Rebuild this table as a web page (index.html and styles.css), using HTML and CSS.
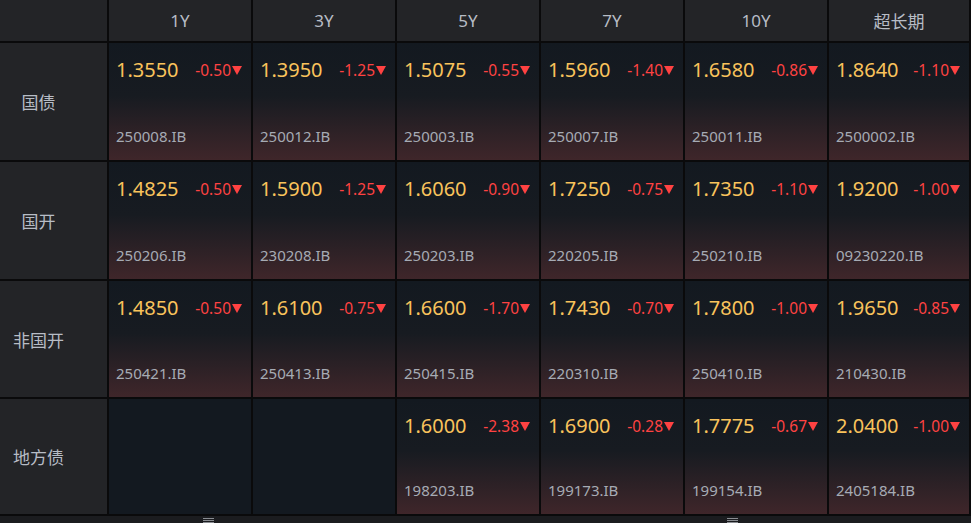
FILE: index.html
```html
<!DOCTYPE html>
<html lang="zh-CN">
<head>
  <meta charset="UTF-8">
  <title>利率债收益率</title>
  <link rel="stylesheet" href="styles.css">
</head>
<body>
  <div class="board" id="board">
    <div class="head-cell"></div>
    <div class="head-cell">1Y</div>
    <div class="head-cell">3Y</div>
    <div class="head-cell">5Y</div>
    <div class="head-cell">7Y</div>
    <div class="head-cell">10Y</div>
    <div class="head-cell">超长期</div>
  </div>
  <div class="status-bar">
    <span class="grip grip-left"></span>
    <span class="grip grip-right"></span>
  </div>

  <script>
    const rows = [
      { name: "国债", cells: [
        ["1.3550", "-0.50", "250008.IB"], ["1.3950", "-1.25", "250012.IB"],
        ["1.5075", "-0.55", "250003.IB"], ["1.5960", "-1.40", "250007.IB"],
        ["1.6580", "-0.86", "250011.IB"], ["1.8640", "-1.10", "2500002.IB"]
      ]},
      { name: "国开", cells: [
        ["1.4825", "-0.50", "250206.IB"], ["1.5900", "-1.25", "230208.IB"],
        ["1.6060", "-0.90", "250203.IB"], ["1.7250", "-0.75", "220205.IB"],
        ["1.7350", "-1.10", "250210.IB"], ["1.9200", "-1.00", "09230220.IB"]
      ]},
      { name: "非国开", cells: [
        ["1.4850", "-0.50", "250421.IB"], ["1.6100", "-0.75", "250413.IB"],
        ["1.6600", "-1.70", "250415.IB"], ["1.7430", "-0.70", "220310.IB"],
        ["1.7800", "-1.00", "250410.IB"], ["1.9650", "-0.85", "210430.IB"]
      ]},
      { name: "地方债", cells: [
        null, null,
        ["1.6000", "-2.38", "198203.IB"], ["1.6900", "-0.28", "199173.IB"],
        ["1.7775", "-0.67", "199154.IB"], ["2.0400", "-1.00", "2405184.IB"]
      ]}
    ];

    const board = document.getElementById("board");
    const arrow = `<svg class="arrow" width="10" height="9" viewBox="0 0 10 9"><path d="M0 0H10L5 9Z" fill="#ff4242"/></svg>`;

    rows.forEach(row => {
      board.innerHTML += `<div class="row-label"><span>${row.name}</span></div>`;
      row.cells.forEach(c => {
        if (!c) {
          board.innerHTML += `<div class="cell empty"></div>`;
          return;
        }
        board.innerHTML += `
          <div class="cell">
            <div class="top-line">
              <span class="price">${c[0]}</span>
              <span class="change">${c[1]}${arrow}</span>
            </div>
            <div class="code">${c[2]}</div>
          </div>`;
      });
    });
  </script>
</body>
</html>
```
FILE: styles.css
```css
:root {
  --line: #0a0a0b;
  --head-bg: #232427;
  --cell-top: #131920;
  --cell-bottom: #3f262a;
  --label: #b7bcc5;
  --price: #f9c35c;
  --down: #ff4242;
  --code: #a6abb4;
}

body {
  margin: 0;
  background: var(--line);
  font-family: "Noto Sans", "Noto Sans CJK SC", sans-serif;
  width: 971px;
  height: 523px;
  overflow: hidden;
}

.board {
  display: grid;
  grid-template-columns: 107px repeat(5, 142px) 140px;
  grid-template-rows: 41px 117px 117px 116px 115px;
  gap: 2px;
  background: var(--line);
  padding-right: 2px;
}

.head-cell {
  background: var(--head-bg);
  color: var(--label);
  font-size: 17px;
  display: flex;
  align-items: center;
  justify-content: center;
  padding-bottom: 1px;
}

.row-label {
  background: var(--head-bg);
  color: var(--label);
  font-size: 17px;
  display: flex;
  align-items: center;
  justify-content: center;
  padding-right: 30px;
}

.cell {
  background: linear-gradient(to bottom, var(--cell-top) 0%, #171b21 45%, var(--cell-bottom) 100%);
  display: flex;
  flex-direction: column;
  justify-content: space-between;
  padding: 14px 9px 14px 7px;
}

.cell.empty {
  background: var(--cell-top);
}

.top-line {
  display: flex;
  justify-content: space-between;
  align-items: center;
}

.price {
  color: var(--price);
  font-size: 20px;
  line-height: 26px;
}

.change {
  color: var(--down);
  font-size: 15.5px;
  display: flex;
  align-items: center;
  gap: 1px;
}

.arrow {
  display: block;
}

.code {
  color: var(--code);
  font-size: 15px;
  line-height: 20px;
}

.status-bar {
  position: relative;
  height: 7px;
  margin-top: 2px;
  background: #1b1c1f;
}

.grip {
  position: absolute;
  top: 2px;
  width: 11px;
  height: 5px;
  background: repeating-linear-gradient(to bottom, #8a8d92 0 1px, transparent 1px 2px);
}

.grip-left {
  left: 203px;
}

.grip-right {
  left: 727px;
}
```
